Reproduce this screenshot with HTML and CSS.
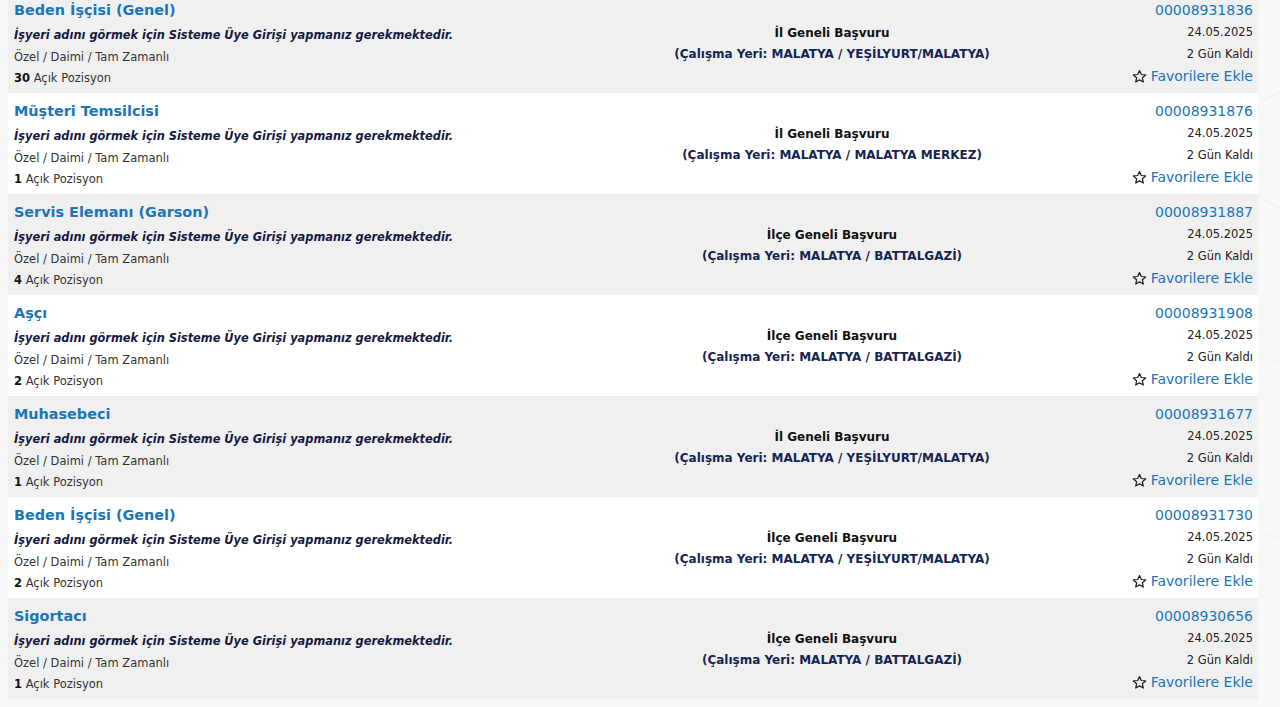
FILE: index.html
```html
<!DOCTYPE html>
<html lang="tr">
<head>
<meta charset="UTF-8">
<meta name="viewport" content="width=device-width, initial-scale=1.0">
<title>İş İlanları</title>
<link rel="stylesheet" href="styles.css">
</head>
<body>

<div class="list">

  <div class="job gray">
    <div class="job-left">
      <a class="job-title" href="#">Beden İşçisi (Genel)</a>
      <div class="employer">İşyeri adını görmek için Sisteme Üye Girişi yapmanız gerekmektedir.</div>
      <div class="type">Özel / Daimi / Tam Zamanlı</div>
      <div class="count"><b>30</b> Açık Pozisyon</div>
    </div>
    <div class="job-center">
      <div class="scope">İl Geneli Başvuru</div>
      <div class="place">(Çalışma Yeri: MALATYA / YEŞİLYURT/MALATYA)</div>
    </div>
    <div class="job-right">
      <a class="job-no" href="#">00008931836</a>
      <div class="date">24.05.2025</div>
      <div class="days">2 Gün Kaldı</div>
      <a class="fav" href="#"><svg viewBox="0 0 24 24"><path d="M12 2.5l2.9 6.3 6.9.7-5.2 4.6 1.5 6.8L12 17.4l-6.1 3.5 1.5-6.8-5.2-4.6 6.9-.7z"/></svg>Favorilere Ekle</a>
    </div>
  </div>

  <div class="job">
    <div class="job-left">
      <a class="job-title" href="#">Müşteri Temsilcisi</a>
      <div class="employer">İşyeri adını görmek için Sisteme Üye Girişi yapmanız gerekmektedir.</div>
      <div class="type">Özel / Daimi / Tam Zamanlı</div>
      <div class="count"><b>1</b> Açık Pozisyon</div>
    </div>
    <div class="job-center">
      <div class="scope">İl Geneli Başvuru</div>
      <div class="place">(Çalışma Yeri: MALATYA / MALATYA MERKEZ)</div>
    </div>
    <div class="job-right">
      <a class="job-no" href="#">00008931876</a>
      <div class="date">24.05.2025</div>
      <div class="days">2 Gün Kaldı</div>
      <a class="fav" href="#"><svg viewBox="0 0 24 24"><path d="M12 2.5l2.9 6.3 6.9.7-5.2 4.6 1.5 6.8L12 17.4l-6.1 3.5 1.5-6.8-5.2-4.6 6.9-.7z"/></svg>Favorilere Ekle</a>
    </div>
  </div>

  <div class="job gray">
    <div class="job-left">
      <a class="job-title" href="#">Servis Elemanı (Garson)</a>
      <div class="employer">İşyeri adını görmek için Sisteme Üye Girişi yapmanız gerekmektedir.</div>
      <div class="type">Özel / Daimi / Tam Zamanlı</div>
      <div class="count"><b>4</b> Açık Pozisyon</div>
    </div>
    <div class="job-center">
      <div class="scope">İlçe Geneli Başvuru</div>
      <div class="place">(Çalışma Yeri: MALATYA / BATTALGAZİ)</div>
    </div>
    <div class="job-right">
      <a class="job-no" href="#">00008931887</a>
      <div class="date">24.05.2025</div>
      <div class="days">2 Gün Kaldı</div>
      <a class="fav" href="#"><svg viewBox="0 0 24 24"><path d="M12 2.5l2.9 6.3 6.9.7-5.2 4.6 1.5 6.8L12 17.4l-6.1 3.5 1.5-6.8-5.2-4.6 6.9-.7z"/></svg>Favorilere Ekle</a>
    </div>
  </div>

  <div class="job">
    <div class="job-left">
      <a class="job-title" href="#">Aşçı</a>
      <div class="employer">İşyeri adını görmek için Sisteme Üye Girişi yapmanız gerekmektedir.</div>
      <div class="type">Özel / Daimi / Tam Zamanlı</div>
      <div class="count"><b>2</b> Açık Pozisyon</div>
    </div>
    <div class="job-center">
      <div class="scope">İlçe Geneli Başvuru</div>
      <div class="place">(Çalışma Yeri: MALATYA / BATTALGAZİ)</div>
    </div>
    <div class="job-right">
      <a class="job-no" href="#">00008931908</a>
      <div class="date">24.05.2025</div>
      <div class="days">2 Gün Kaldı</div>
      <a class="fav" href="#"><svg viewBox="0 0 24 24"><path d="M12 2.5l2.9 6.3 6.9.7-5.2 4.6 1.5 6.8L12 17.4l-6.1 3.5 1.5-6.8-5.2-4.6 6.9-.7z"/></svg>Favorilere Ekle</a>
    </div>
  </div>

  <div class="job gray">
    <div class="job-left">
      <a class="job-title" href="#">Muhasebeci</a>
      <div class="employer">İşyeri adını görmek için Sisteme Üye Girişi yapmanız gerekmektedir.</div>
      <div class="type">Özel / Daimi / Tam Zamanlı</div>
      <div class="count"><b>1</b> Açık Pozisyon</div>
    </div>
    <div class="job-center">
      <div class="scope">İl Geneli Başvuru</div>
      <div class="place">(Çalışma Yeri: MALATYA / YEŞİLYURT/MALATYA)</div>
    </div>
    <div class="job-right">
      <a class="job-no" href="#">00008931677</a>
      <div class="date">24.05.2025</div>
      <div class="days">2 Gün Kaldı</div>
      <a class="fav" href="#"><svg viewBox="0 0 24 24"><path d="M12 2.5l2.9 6.3 6.9.7-5.2 4.6 1.5 6.8L12 17.4l-6.1 3.5 1.5-6.8-5.2-4.6 6.9-.7z"/></svg>Favorilere Ekle</a>
    </div>
  </div>

  <div class="job">
    <div class="job-left">
      <a class="job-title" href="#">Beden İşçisi (Genel)</a>
      <div class="employer">İşyeri adını görmek için Sisteme Üye Girişi yapmanız gerekmektedir.</div>
      <div class="type">Özel / Daimi / Tam Zamanlı</div>
      <div class="count"><b>2</b> Açık Pozisyon</div>
    </div>
    <div class="job-center">
      <div class="scope">İlçe Geneli Başvuru</div>
      <div class="place">(Çalışma Yeri: MALATYA / YEŞİLYURT/MALATYA)</div>
    </div>
    <div class="job-right">
      <a class="job-no" href="#">00008931730</a>
      <div class="date">24.05.2025</div>
      <div class="days">2 Gün Kaldı</div>
      <a class="fav" href="#"><svg viewBox="0 0 24 24"><path d="M12 2.5l2.9 6.3 6.9.7-5.2 4.6 1.5 6.8L12 17.4l-6.1 3.5 1.5-6.8-5.2-4.6 6.9-.7z"/></svg>Favorilere Ekle</a>
    </div>
  </div>

  <div class="job gray">
    <div class="job-left">
      <a class="job-title" href="#">Sigortacı</a>
      <div class="employer">İşyeri adını görmek için Sisteme Üye Girişi yapmanız gerekmektedir.</div>
      <div class="type">Özel / Daimi / Tam Zamanlı</div>
      <div class="count"><b>1</b> Açık Pozisyon</div>
    </div>
    <div class="job-center">
      <div class="scope">İlçe Geneli Başvuru</div>
      <div class="place">(Çalışma Yeri: MALATYA / BATTALGAZİ)</div>
    </div>
    <div class="job-right">
      <a class="job-no" href="#">00008930656</a>
      <div class="date">24.05.2025</div>
      <div class="days">2 Gün Kaldı</div>
      <a class="fav" href="#"><svg viewBox="0 0 24 24"><path d="M12 2.5l2.9 6.3 6.9.7-5.2 4.6 1.5 6.8L12 17.4l-6.1 3.5 1.5-6.8-5.2-4.6 6.9-.7z"/></svg>Favorilere Ekle</a>
    </div>
  </div>

</div>

</body>
</html>
```

FILE: styles.css
```css
body {
  margin: 0;
  padding: 0;
  font-family: "DejaVu Sans", Verdana, sans-serif;
  font-size: 11.5px;
  color: #222;
  background-color: #f8f8f8;
  background-image:
    radial-gradient(circle at 1300px 150px, transparent 60px, rgba(0, 0, 0, 0.03) 61px, transparent 62px),
    radial-gradient(circle at 1300px 450px, transparent 90px, rgba(0, 0, 0, 0.03) 91px, transparent 92px),
    radial-gradient(circle at -20px 200px, transparent 40px, rgba(0, 0, 0, 0.03) 41px, transparent 42px);
  overflow: hidden;
}
a {
  text-decoration: none;
}
.list {
  width: 1250px;
  margin: -8px 0 0 8px;
}
.job {
  display: grid;
  grid-template-columns: 634px 368px 1fr;
  padding: 5px 5px 4px 6px;
  background-color: #fff;
}
.job.gray {
  background-color: #f0f0f0;
}
.job-title {
  display: block;
  line-height: 26px;
  font-size: 14.4px;
  font-weight: bold;
  color: #1a75b9;
}
.employer {
  line-height: 24px;
  font-size: 11.4px;
  font-weight: bold;
  font-style: italic;
  color: #16193f;
}
.type {
  line-height: 20px;
  color: #333;
}
.count {
  line-height: 22px;
  color: #333;
}
.count b {
  color: #111;
}
.job-center {
  padding-top: 25px;
  text-align: center;
  font-weight: bold;
}
.scope {
  line-height: 22px;
  font-size: 12px;
  color: #111;
}
.place {
  line-height: 21px;
  font-size: 12px;
  color: #152552;
}
.job-right {
  text-align: right;
}
.job-no {
  display: block;
  line-height: 26px;
  font-size: 14px;
  color: #1a75b9;
}
.date {
  line-height: 19px;
  color: #222;
}
.days {
  line-height: 24px;
  color: #222;
}
.fav {
  display: inline-flex;
  align-items: center;
  gap: 4px;
  line-height: 20px;
  font-size: 14px;
  color: #1a75b9;
}
.fav svg {
  width: 15px;
  height: 15px;
  fill: none;
  stroke: #222;
  stroke-width: 2;
  stroke-linejoin: round;
}
```
